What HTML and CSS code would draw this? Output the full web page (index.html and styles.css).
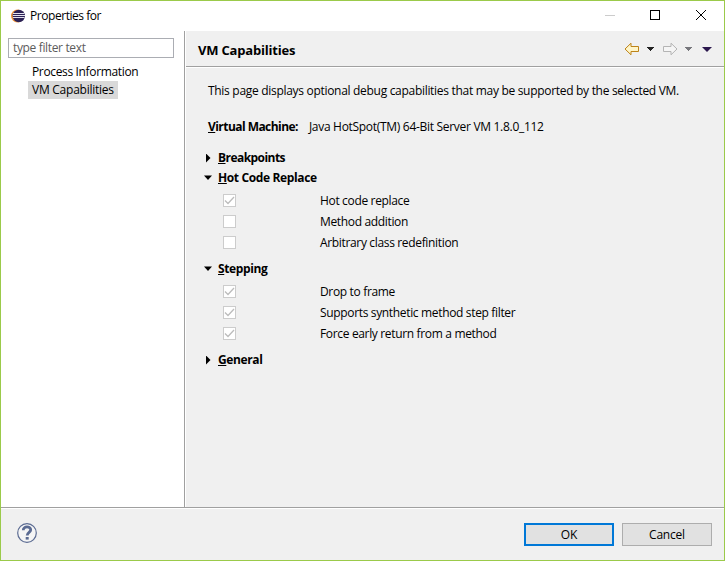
FILE: index.html
```html
<!DOCTYPE html>
<html lang="en">
<head>
<meta charset="utf-8">
<title>Properties for</title>
<link rel="stylesheet" href="styles.css">
</head>
<body>
<div class="window">
  <header class="titlebar">
    <svg class="logo" width="14" height="14" viewBox="0 0 14 14">
      <circle cx="6.4" cy="7" r="6.4" fill="#f0963c"/>
      <circle cx="7.8" cy="7" r="6.2" fill="#2c2255"/>
      <path d="M2 4.5h11.5M1.8 6.5h12.2M2 8.5h11.5" stroke="#e4e2ee" stroke-width="1"/>
    </svg>
    <span class="caption">Properties for</span>
    <svg class="controls" width="104" height="12" viewBox="0 0 104 12" fill="none" shape-rendering="crispEdges">
      <path d="M0 6.5h10" stroke="#ccc"/>
      <rect x="45.5" y="1.5" width="9" height="9" stroke="#000"/>
      <path d="M91 1l10 10M101 1l-10 10" stroke="#000" shape-rendering="auto"/>
    </svg>
  </header>
  <div class="body">
    <nav class="sidebar">
      <div class="filter">type filter text</div>
      <div class="node">Process Information</div>
      <div class="node selected">VM Capabilities</div>
    </nav>
    <main class="page">
      <div class="pagehead">
        <h1>VM Capabilities</h1>
        <svg class="history" width="90" height="14" viewBox="0 0 90 14">
          <path d="M1 7L7 1.2V4.5H14.5V9.5H7V12.8Z" fill="#fff5c8" stroke="#bd8318" stroke-linejoin="round"/>
          <path d="M23 5h7v1h-1v1h-1v1h-1v1h-1v-1h-1v-1h-1v-1h-1z" fill="#222"/>
          <path d="M53 7L47 1.2V4.5H39.5V9.5H47V12.8Z" fill="#f5f5f5" stroke="#b4b4b4" stroke-linejoin="round"/>
          <path d="M61 5h7v1h-1v1h-1v1h-1v1h-1v-1h-1v-1h-1v-1h-1z" fill="#77777c"/>
          <path d="M78 5h10l-5 5z" fill="#2b174d"/>
        </svg>
      </div>
      <div class="content">
        <p class="intro">This page displays optional debug capabilities that may be supported by the selected VM.</p>
        <p class="vm"><b><u>V</u>irtual Machine:</b><span>Java HotSpot(TM) 64-Bit Server VM 1.8.0_112</span></p>
        <section>
          <h2 class="closed tight"><u>B</u>reakpoints</h2>
        </section>
        <section class="group">
          <h2 class="open"><u>H</u>ot Code Replace</h2>
          <div class="row"><i class="box"><svg width="11" height="11"><path d="M1 5.5L4 8.5L10 2"/></svg></i><span>Hot code replace</span></div>
          <div class="row"><i class="box"></i><span>Method addition</span></div>
          <div class="row"><i class="box"></i><span>Arbitrary class redefinition</span></div>
        </section>
        <section class="group">
          <h2 class="open"><u>S</u>tepping</h2>
          <div class="row"><i class="box"><svg width="11" height="11"><path d="M1 5.5L4 8.5L10 2"/></svg></i><span>Drop to frame</span></div>
          <div class="row"><i class="box"><svg width="11" height="11"><path d="M1 5.5L4 8.5L10 2"/></svg></i><span>Supports synthetic method step filter</span></div>
          <div class="row"><i class="box"><svg width="11" height="11"><path d="M1 5.5L4 8.5L10 2"/></svg></i><span>Force early return from a method</span></div>
        </section>
        <section>
          <h2 class="closed"><u>G</u>eneral</h2>
        </section>
      </div>
    </main>
  </div>
  <footer class="footer">
    <svg class="help" width="20" height="20" viewBox="0 0 20 20" fill="none" stroke="#5b6b92">
      <circle cx="10" cy="10" r="9.3" fill="#f5f5f5" stroke-width="1.2"/>
      <path d="M6.3 7.3C6.2 2.7 13.8 2.9 13.7 6.9C13.6 9.4 10.2 9.3 10.2 12.5" stroke-width="2.8"/>
      <path d="M10.2 14v2.6" stroke-width="3"/>
    </svg>
    <span class="button ok">OK</span>
    <span class="button cancel">Cancel</span>
  </footer>
</div>
</body>
</html>
```
FILE: styles.css
```css
* { box-sizing: border-box; }

body {
  margin: 0;
  font: 12px/16px "Open Sans", "Noto Sans", sans-serif;
  letter-spacing: -0.3px;
  color: #000;
}

.window {
  width: 725px;
  height: 561px;
  display: flex;
  flex-direction: column;
  border: 1px solid #9bca4a;
  background: #f0f0f0;
  white-space: nowrap;
}

.titlebar {
  height: 30px;
  display: flex;
  align-items: center;
  padding: 0 15px 0 10px;
  background: #fff;
}

.caption { margin-left: 5px; letter-spacing: -0.45px; }
.controls { margin: 0 0 2px auto; }

.body { flex: 1; display: flex; min-height: 0; }

.sidebar {
  width: 184px;
  padding: 7px 0 0 7px;
  background: #fff;
  border-right: 1px solid #a0a0a0;
}

.filter {
  width: 166px;
  height: 20px;
  margin-bottom: 5px;
  padding-left: 4px;
  line-height: 18px;
  letter-spacing: -0.4px;
  border: 1px solid #abadb3;
  color: #5c5c5c;
}

.filter { letter-spacing: -0.35px; }

.node {
  width: 90px;
  height: 18px;
  margin-left: 20px;
  padding-left: 4px;
  line-height: 18px;
  letter-spacing: -0.35px;
}

.selected { background: #d9d9d9; letter-spacing: -0.25px; }

.page { flex: 1; border-left: 1px solid #fff; }

.pagehead {
  height: 37px;
  display: flex;
  align-items: center;
  justify-content: space-between;
  padding: 0 10px 0 12px;
  border-bottom: 1px solid #fff;
  box-shadow: inset 0 -1px #a0a0a0;
}

h1, h2, p { margin: 0; font-size: 12px; }
h1, h2, b { font-weight: 700; }
h1 { padding-top: 2px; font-size: 13px; letter-spacing: -0.2px; }
u { text-underline-offset: 1px; text-decoration-skip-ink: none; }

.content { padding: 15px 0 0 18px; }
.intro { padding-left: 4px; }
.vm { display: flex; margin: 20px 0 13px; padding-left: 4px; }
.vm b { letter-spacing: -0.55px; }
.vm span { margin-left: 11px; }

h2 {
  display: flex;
  align-items: center;
  height: 20px;
  letter-spacing: -0.37px;
}

.tight { letter-spacing: -0.55px; }

h2::before {
  content: "";
  width: 14px;
  height: 9px;
  background: #000;
}

.closed::before { clip-path: polygon(2px 0, 6.5px 4.5px, 2px 9px); }
.open::before { clip-path: polygon(0 2px, 8px 2px, 4px 6.5px); }

.group { padding-bottom: 6px; }

.row {
  display: flex;
  align-items: center;
  height: 21px;
  padding-left: 19px;
  letter-spacing: -0.34px;
}

.group h2 + .row { margin-top: 2px; }

.row .box {
  width: 13px;
  height: 13px;
  margin-right: 84px;
  border: 1px solid #ccc;
  background: #fff;
}

.box svg { display: block; fill: none; stroke: #bcbcbc; stroke-width: 1.3; }

.footer {
  height: 53px;
  display: flex;
  align-items: center;
  gap: 8px;
  padding: 1px 12px 0 16px;
  border-top: 1px solid #a0a0a0;
  box-shadow: inset 0 1px #fff;
}

.help { margin-bottom: 3px; }

.button {
  width: 90px;
  height: 23px;
  border: 1px solid #adadad;
  background: #e1e1e1;
  line-height: 21px;
  letter-spacing: -0.2px;
  text-align: center;
}

.ok { margin-left: auto; border: 2px solid #0078d7; line-height: 19px; }
```
